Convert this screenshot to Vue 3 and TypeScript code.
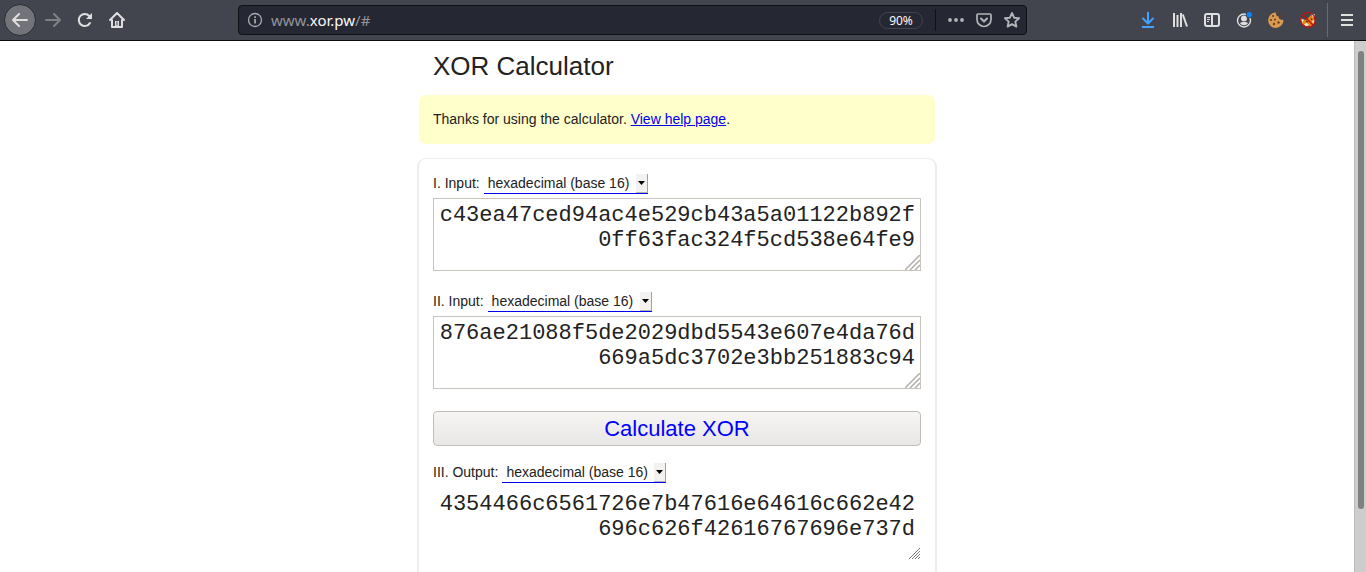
<script setup lang="ts">
import { ref } from 'vue'

type Base = 2 | 8 | 10 | 16

const bases: { value: Base; name: string }[] = [
  { value: 16, name: 'hexadecimal (base 16)' },
  { value: 10, name: 'decimal (base 10)' },
  { value: 8, name: 'octal (base 8)' },
  { value: 2, name: 'binary (base 2)' },
]

const fields = ref([
  { id: 'first', label: 'I. Input:', base: 16 as Base, text: 'c43ea47ced94ac4e529cb43a5a01122b892f0ff63fac324f5cd538e64fe9' },
  { id: 'second', label: 'II. Input:', base: 16 as Base, text: '876ae21088f5de2029dbd5543e607e4da76d669a5dc3702e3bb251883c94' },
])
const outputBase = ref<Base>(16)
const output = ref('4354466c6561726e7b47616e64616c662e42696c626f42616767696e737d')

function parse(text: string, base: Base): bigint {
  const digits = text.trim().toLowerCase() || '0'
  let total = 0n
  for (const ch of digits) {
    const value = parseInt(ch, base)
    if (Number.isNaN(value)) throw new Error('Invalid digit')
    total = total * BigInt(base) + BigInt(value)
  }
  return total
}

function calculate() {
  try {
    const [a, b] = fields.value.map((f) => parse(f.text, f.base))
    output.value = (a ^ b).toString(outputBase.value)
  } catch {
    output.value = ''
  }
}
</script>

<template>
  <div class="browser">
    <header class="toolbar">
      <button class="tool back" aria-label="Back">
        <svg width="16" height="16" viewBox="0 0 16 16" fill="none" stroke="#dedfde" stroke-width="2" stroke-linecap="round" stroke-linejoin="round"><path d="M15 8H1M7 2L1 8l6 6" /></svg>
      </button>
      <button class="tool" aria-label="Forward" disabled>
        <svg width="16" height="16" viewBox="0 0 16 16" fill="none" stroke="#7e8085" stroke-width="2" stroke-linecap="round" stroke-linejoin="round"><path d="M1 8h14M9 2l6 6-6 6" /></svg>
      </button>
      <button class="tool" aria-label="Reload">
        <svg width="16" height="16" viewBox="0 0 16 16" fill="none" stroke="#dedfde" stroke-width="2"><path d="M13 11A6 6 0 1 1 12.300 4" stroke-linecap="round" /><path d="M15 1v6H9z" fill="#dedfde" stroke="none" /></svg>
      </button>
      <button class="tool" aria-label="Home">
        <svg width="16" height="16" viewBox="0 0 16 16" fill="none" stroke="#dedfde" stroke-width="2" stroke-linecap="round" stroke-linejoin="round"><path d="M1 8l7-7 7 7M3 8v7h10V8" /><path d="M6 15V9h4v6z" fill="#dedfde" stroke="none" /><path d="M8 10v3" stroke="#42454e" stroke-width="1" /></svg>
      </button>

      <div class="urlbar">
        <svg class="info" width="16" height="16" viewBox="0 0 16 16"><circle cx="8" cy="8" r="6.500" fill="none" stroke="#a9abaf" stroke-width="1.300" /><path d="M7.200 7h1.700v4.500H7.200zM7.200 4.300h1.700v1.600H7.200z" fill="#a9abaf" /></svg>
        <div class="address">www.<b>xor.pw</b>/#</div>
        <button class="zoom">90%</button>
        <span class="divider"></span>
        <button class="page-action" aria-label="Page actions">
          <svg width="16" height="16" viewBox="0 0 16 16" fill="#b2b4b8"><circle cx="2" cy="8" r="1.900" /><circle cx="8" cy="8" r="1.900" /><circle cx="14" cy="8" r="1.900" /></svg>
        </button>
        <button class="page-action" aria-label="Save to Pocket">
          <svg width="16" height="16" viewBox="0 0 16 16" fill="none" stroke="#b2b4b8" stroke-width="2" stroke-linecap="round" stroke-linejoin="round"><path d="M2 2h12a1 1 0 0 1 1 1v4.500a7 7 0 0 1-14 0V3a1 1 0 0 1 1-1z" stroke-width="1.700" /><path d="M5 6.500l3 3 3-3" /></svg>
        </button>
        <button class="page-action" aria-label="Bookmark this page">
          <svg width="16" height="16" viewBox="0 0 16 16" fill="none" stroke="#b2b4b8" stroke-width="1.900" stroke-linejoin="round"><path d="M8 1l2.100 4.700 5 .5-3.800 3.400 1.100 5L8 12.100l-4.400 2.500 1.100-5L.9 6.200l5-.5z" /></svg>
        </button>
      </div>

      <button class="tool" aria-label="Downloads">
        <svg width="16" height="16" viewBox="0 0 16 16" fill="none" stroke="#45a1ff" stroke-width="2" stroke-linejoin="round"><path d="M8 0v11M2.500 6L8 11.500 13.500 6M2 15h12" /></svg>
      </button>
      <button class="tool" aria-label="Library">
        <svg width="16" height="16" viewBox="0 0 16 16" fill="none" stroke="#dedfde" stroke-width="2"><path d="M2 1v14M5.500 3v12M9 1v14M10.800 2.500l4.200 12" /></svg>
      </button>
      <button class="tool" aria-label="Sidebars">
        <svg width="16" height="16" viewBox="0 0 16 16" fill="none" stroke="#dedfde"><rect x="1" y="2" width="14" height="12" rx="2" stroke-width="2" /><path d="M8 2v12" stroke-width="2" /><path d="M3 5.500h3M3 7.500h3M3 9.500h2" stroke-width="1" /></svg>
      </button>
      <button class="tool" aria-label="Account">
        <svg width="16" height="16" viewBox="0 0 16 16"><circle cx="8" cy="8.500" r="6.500" fill="none" stroke="#dedfde" stroke-width="1.400" /><circle cx="8" cy="6.500" r="3" fill="#dedfde" /><path d="M4 11c1-1.500 7-1.500 8 0-1.500 3-6.500 3-8 0z" fill="#dedfde" /><circle cx="13.300" cy="2.700" r="3.500" fill="#42454e" /><circle cx="13.300" cy="2.700" r="2.600" fill="#0a84ff" /></svg>
      </button>
      <button class="tool" aria-label="Cookies">
        <svg width="16" height="16" viewBox="0 0 16 16"><path d="M8 .5C7.500 3 9 4.500 10.500 4.500c0 2 1.500 3.500 5 3.500A7.700 7.700 0 1 1 8 .5z" fill="#d99a50" /><g fill="#70401f"><circle cx="5" cy="4" r="1.100" /><circle cx="3" cy="8" r="1.100" /><circle cx="7" cy="7.500" r="1.100" /><circle cx="6" cy="12" r="1.200" /><circle cx="10.500" cy="10.500" r="1.200" /><circle cx="10.500" cy="1" r=".8" /><circle cx="14" cy="2" r=".8" /><circle cx="12.500" cy="4.500" r=".8" /></g></svg>
      </button>
      <button class="tool" aria-label="Proxy disabled">
        <svg width="16" height="16" viewBox="0 0 16 16"><path d="M2 7l4 1 5-5 3 3 .5 5L11 14.500 6 14l-4-2z" fill="#e5830e" /><path d="M.5 6l3.500 2L2 11zM11 1.500l4 1-2 3.500zM4 12l3-1 2 2-3 1.500zM12 9l3-1-2 4z" fill="#eee3d5" /><path d="M6 9l2 1M11 6.500l1 1.500" stroke="#4a2a16" stroke-width="1.200" /><circle cx="8" cy="8" r="7.300" fill="none" stroke="#c40d0d" stroke-width="1.200" /><path d="M3 3l10 10" stroke="#c40d0d" stroke-width="1.200" /></svg>
      </button>
      <span class="separator"></span>
      <button class="tool" aria-label="Open menu">
        <svg width="16" height="16" viewBox="0 0 16 16" stroke="#dedfde" stroke-width="2"><path d="M2 3h12M2 8h12M2 13h12" /></svg>
      </button>
    </header>

    <div class="viewport">
      <main class="page">
        <div class="column">
          <h1>XOR Calculator</h1>
          <p class="notice">Thanks for using the calculator. <a href="#">View help page</a>.</p>

          <form class="card" @submit.prevent="calculate">
            <section v-for="field in fields" :key="field.id" class="field">
              <div class="caption">
                <label :for="field.id">{{ field.label }}</label>
                <span class="picker">
                  <select v-model="field.base" :aria-label="field.label + ' base'">
                    <option v-for="b in bases" :key="b.value" :value="b.value">{{ b.name }}</option>
                  </select>
                  <span class="arrow"><svg width="7" height="4" viewBox="0 0 7 4"><path d="M0 0h7L3.500 4z" /></svg></span>
                </span>
              </div>
              <div class="box">
                <textarea :id="field.id" v-model="field.text" spellcheck="false"></textarea>
                <svg class="grip" width="15" height="15" viewBox="0 0 15 15" stroke="#b0aeac" stroke-width="1.500"><path d="M0 15L15 0M5 15L15 5M10 15l5-5" /></svg>
              </div>
            </section>

            <button class="submit" type="submit">Calculate XOR</button>

            <section class="field">
              <div class="caption">
                <label for="output">III. Output:</label>
                <span class="picker">
                  <select v-model="outputBase" aria-label="Output base">
                    <option v-for="b in bases" :key="b.value" :value="b.value">{{ b.name }}</option>
                  </select>
                  <span class="arrow"><svg width="7" height="4" viewBox="0 0 7 4"><path d="M0 0h7L3.500 4z" /></svg></span>
                </span>
              </div>
              <div class="box">
                <textarea id="output" class="result" :value="output" readonly></textarea>
                <svg class="grip" width="11" height="11" viewBox="0 0 11 11" stroke="#777777" stroke-width="1"><path d="M0 11L11 0M3 11l8-8M6 11l5-5M9 11l2-2" /></svg>
              </div>
            </section>
          </form>
        </div>
      </main>
      <div class="scrollbar"><div class="thumb"></div></div>
    </div>
  </div>
</template>

<style>
body {
  margin: 0;
}
</style>

<style scoped>
.browser {
  display: flex;
  flex-direction: column;
  height: 100vh;
  overflow: hidden;
  background: #ffffff;
  color: #222222;
  font-family: "Liberation Sans", Arial, sans-serif;
  font-size: 14px;
}

button {
  font: inherit;
}

.toolbar {
  display: flex;
  flex: none;
  align-items: center;
  height: 40px;
  padding: 0 3px 0 4px;
  background: #42454e;
  border-bottom: 1px solid #0c0c0d;
}

.tool {
  display: flex;
  flex: none;
  align-items: center;
  justify-content: center;
  width: 32px;
  height: 32px;
  padding: 0;
  border: 0;
  border-radius: 4px;
  background: none;
}

.back {
  margin-right: 1px;
  border: 1px solid #2b2d35;
  border-radius: 50%;
  background: #72747a;
}

.separator {
  width: 1px;
  height: 34px;
  margin: 0 3px;
  background: #686a71;
}

.urlbar {
  display: flex;
  flex: 1;
  align-items: center;
  box-sizing: border-box;
  height: 30px;
  margin: 0 105px;
  padding: 0 0 0 8px;
  border: 1px solid #0f1014;
  border-radius: 4px;
  background: #252833;
  font-family: "Noto Sans", sans-serif;
}

.address {
  flex: 1;
  margin-left: 8px;
  color: #92949a;
  font-size: 15px;
}

.address b {
  color: #f9f9fa;
  font-weight: 400;
}

.zoom {
  box-sizing: border-box;
  width: 44px;
  height: 17px;
  padding: 0;
  border: 1px solid #42454e;
  border-radius: 9px;
  background: none;
  color: #f9f9fa;
  font-size: 12px;
  line-height: 15px;
}

.divider {
  width: 1px;
  height: 22px;
  margin: 0 6px 0 12px;
  background: #101116;
}

.page-action {
  display: flex;
  align-items: center;
  justify-content: center;
  width: 28px;
  height: 28px;
  padding: 0;
  border: 0;
  background: none;
}

.viewport {
  display: flex;
  flex: 1;
  min-height: 0;
}

.page {
  flex: 1;
  overflow: hidden;
}

.scrollbar {
  display: flex;
  flex-direction: column;
  align-items: center;
  box-sizing: border-box;
  width: 12px;
  padding: 10px 0 0;
  border-left: 1px solid #bdbbb7;
  background: #cdcdcd;
}

.thumb {
  width: 6px;
  height: 88%;
  border-radius: 3px;
  background: #7d8181;
}

.column {
  width: 100%;
  max-width: 516px;
  margin: 0 auto;
}

h1 {
  margin: 0;
  padding: 10px 14px 14px;
  font-size: 26px;
  font-weight: 400;
  line-height: 30px;
}

.notice {
  margin: 0 0 14px;
  padding: 14px;
  border-radius: 7px;
  background: #ffffcc;
  line-height: 21px;
}

.notice a {
  color: #0000ee;
}

.card {
  margin: 0 -2px;
  padding: 14px 14px 40px;
  border: solid #ededed;
  border-width: 1px 2px;
  border-radius: 9px;
}

.field {
  margin-bottom: 20px;
}

.caption {
  display: flex;
  gap: 4px;
  height: 21px;
  margin-bottom: 4px;
  line-height: 21px;
}

.picker {
  display: flex;
  position: relative;
}

select {
  appearance: none;
  padding: 0 18px 0 4px;
  border: 0;
  border-bottom: 1px solid #0000ee;
  border-radius: 0;
  background: transparent;
  color: inherit;
  font: inherit;
}

.arrow {
  display: flex;
  position: absolute;
  top: 1px;
  right: 0;
  align-items: center;
  justify-content: center;
  box-sizing: border-box;
  width: 12px;
  height: 19px;
  border-right: 1px solid #a3a19e;
  border-bottom: 1px solid #b5b3b0;
  background: #f3f2f1;
  pointer-events: none;
}

.box {
  position: relative;
}

textarea {
  display: block;
  box-sizing: border-box;
  width: 100%;
  height: 73px;
  padding: 4px 5px;
  border: 1px solid #c8c3bd;
  border-radius: 0;
  outline: 0;
  overflow: hidden;
  resize: none;
  background: #ffffff;
  color: #222222;
  font-family: "Liberation Mono", "Courier New", monospace;
  font-size: 22px;
  line-height: 25px;
  text-align: right;
}

.result {
  border-color: transparent;
}

.grip {
  position: absolute;
  right: 1px;
  bottom: 1px;
  pointer-events: none;
}

.submit {
  display: block;
  width: 100%;
  height: 35px;
  margin: 22px 0 16px;
  padding: 0;
  border: 1px solid #c1beba;
  border-radius: 4px;
  background: linear-gradient(#f6f5f4, #e8e7e6);
  color: #0000ff;
  font-size: 22px;
}
</style>
